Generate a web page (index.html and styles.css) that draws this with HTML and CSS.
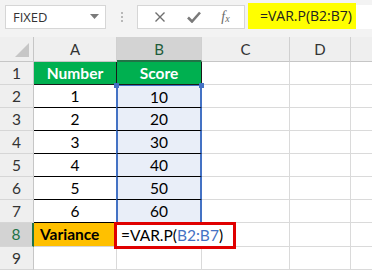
FILE: index.html
```html
<!DOCTYPE html>
<html lang="en">
<head>
    <meta charset="UTF-8">
    <title>VAR.P example</title>
    <link rel="stylesheet" href="styles.css">
</head>
<body>

    <!-- Formula bar -->
    <div class="toolbar">
        <div class="namebox">
            <span>FIXED</span>
            <svg class="caret" width="9" height="5" viewBox="0 0 9 5"><polygon points="0,0 9,0 4.5,5" fill="#7a7a7a"/></svg>
        </div>
        <div class="grip"><i></i><i></i><i></i></div>
        <div class="fxbox">
            <svg width="12" height="12" viewBox="0 0 12 12"><path d="M1.5 1.5 L10.5 10.5 M10.5 1.5 L1.5 10.5" stroke="#6f6f6f" stroke-width="1.4" fill="none"/></svg>
            <svg width="14" height="12" viewBox="0 0 14 12"><path d="M1 6.5 L5 10.5 L13 1.5" stroke="#7a7a7a" stroke-width="2.6" fill="none"/></svg>
            <span class="fx">f<sub>x</sub></span>
        </div>
        <div class="formula"><span class="hl">=VAR.P(B2:B7)</span></div>
    </div>

    <!-- Sheet -->
    <div class="sheet">
        <div class="corner"><svg width="15" height="14" viewBox="0 0 15 14"><polygon points="15,0 15,14 1,14" fill="#c6c6c6"/></svg></div>
        <div class="hd">A</div>
        <div class="hd on">B</div>
        <div class="hd">C</div>
        <div class="hd">D</div>
        <div class="hd last"></div>

        <div class="rh">1</div>
        <div class="c green">Number</div>
        <div class="c green">Score</div>
        <div class="c"></div><div class="c"></div><div class="c last"></div>

        <div class="rh">2</div>
        <div class="c tb">1</div>
        <div class="c tb sel top"><span class="hdl tl"></span><span class="hdl tr"></span>10</div>
        <div class="c"></div><div class="c"></div><div class="c last"></div>

        <div class="rh">3</div>
        <div class="c tb">2</div>
        <div class="c tb sel">20</div>
        <div class="c"></div><div class="c"></div><div class="c last"></div>

        <div class="rh">4</div>
        <div class="c tb">3</div>
        <div class="c tb sel">30</div>
        <div class="c"></div><div class="c"></div><div class="c last"></div>

        <div class="rh">5</div>
        <div class="c tb">4</div>
        <div class="c tb sel">40</div>
        <div class="c"></div><div class="c"></div><div class="c last"></div>

        <div class="rh">6</div>
        <div class="c tb">5</div>
        <div class="c tb sel">50</div>
        <div class="c"></div><div class="c"></div><div class="c last"></div>

        <div class="rh">7</div>
        <div class="c tb">6</div>
        <div class="c tb sel bottom"><span class="hdl bl"></span><span class="hdl br"></span>60</div>
        <div class="c"></div><div class="c"></div><div class="c last"></div>

        <div class="rh on tall">8</div>
        <div class="c orange tall">Variance</div>
        <div class="c tall active">
            <div class="edit">=VAR.P(<span class="ref">B2:B7</span>)</div>
        </div>
        <div class="c tall"></div><div class="c tall"></div><div class="c tall last"></div>

        <div class="rh">9</div>
        <div class="c"></div><div class="c"></div><div class="c"></div><div class="c"></div><div class="c last"></div>
    </div>

</body>
</html>
```

FILE: styles.css
```css
/* Reset */
* {
    box-sizing: border-box;
}

body, html {
    margin: 0;
    padding: 0;
    width: 372px;
    height: 270px;
    overflow: hidden;
    background-color: #fff;
    font-family: Lato, "Liberation Sans", sans-serif;
    color: #000;
}

/* --- Formula bar --- */
.toolbar {
    height: 37px;
    background-color: #f3f3f3;
    display: flex;
    align-items: flex-start;
    padding-top: 5px;
}

.namebox {
    margin-left: 5px;
    width: 101px;
    height: 24px;
    background-color: #fff;
    border: 1px solid #d6d6d6;
    display: flex;
    align-items: center;
    justify-content: space-between;
    padding: 0 6px 0 7px;
    font-family: "Open Sans", sans-serif;
    font-size: 13px;
    color: #333;
}

.caret {
    margin-bottom: 2px;
}

.grip {
    width: 31px;
    height: 24px;
    display: flex;
    flex-direction: column;
    align-items: center;
    justify-content: center;
    gap: 2px;
}

.grip i {
    width: 2px;
    height: 2px;
    background-color: #b8b8b8;
}

.fxbox {
    width: 108px;
    height: 24px;
    background-color: #fff;
    border: 1px solid #d6d6d6;
    display: flex;
    align-items: center;
    justify-content: space-around;
    padding: 0 4px 0 6px;
}

.fx {
    font-family: "Liberation Serif", serif;
    font-style: italic;
    font-size: 14px;
    color: #6a6a6a;
    line-height: 1;
}

.fx sub {
    font-size: 10px;
    vertical-align: -1px;
}

.formula {
    flex: 1;
    height: 24px;
    margin-left: 3px;
    background-color: #fff;
    position: relative;
}

.formula .hl {
    position: absolute;
    left: 0;
    top: -2px;
    width: 108px;
    height: 26px;
    background-color: #ffff00;
    font-family: "Open Sans", sans-serif;
    font-size: 14px;
    line-height: 26px;
    padding-left: 12px;
    color: #222;
}

/* --- Sheet grid --- */
.sheet {
    display: grid;
    grid-template-columns: 34px 83px 85px 88px 61px 1fr;
    grid-template-rows: 25px repeat(7, 23px) 24px 23px;
    font-size: 15.5px;
}

.corner {
    background-color: #efefef;
    border-right: 1px solid #c6c6c6;
    border-bottom: 1px solid #c6c6c6;
    display: flex;
    align-items: flex-end;
    justify-content: flex-end;
    padding: 0 4px 4px 0;
}

.hd {
    background-color: #efefef;
    border-right: 1px solid #d0d0d0;
    border-bottom: 1px solid #c6c6c6;
    text-align: center;
    line-height: 24px;
    color: #333;
    font-size: 15px;
}

.hd.on {
    background-color: #d3d3d3;
    border-bottom: 2px solid #217346;
    color: #1e5c3a;
}

.rh {
    background-color: #efefef;
    border-right: 1px solid #c6c6c6;
    border-bottom: 1px solid #d6d6d6;
    text-align: center;
    line-height: 22px;
    color: #333;
}

.rh.on {
    background-color: #d3d3d3;
    border-right: 2px solid #217346;
    color: #217346;
}

.c {
    position: relative;
    border-right: 1px solid #dadada;
    border-bottom: 1px solid #dadada;
    text-align: center;
    line-height: 22px;
}

.last {
    border-right: none;
}

.green {
    background-color: #00b050;
    color: #fff;
    font-weight: bold;
    border-right: 1px solid #1a1a1a;
    border-bottom: 1px solid #1a1a1a;
}

.tb {
    border-right: 1px solid #000;
    border-bottom: 1px solid #000;
}

/* Referenced range B2:B7 */
.sel {
    background-color: #e9eef8;
    border-left: 2px solid #4472c4;
    border-right: 2px solid #4472c4;
    margin-left: -1px;
}

.sel.top {
    border-top: 1px solid #4472c4;
}

.sel.bottom {
    border-bottom: 1px solid #4472c4;
}

.hdl {
    position: absolute;
    width: 5px;
    height: 5px;
    background-color: #4472c4;
}

.hdl.tl { left: -4px; top: -3px; }
.hdl.tr { right: -4px; top: -3px; }
.hdl.bl { left: -4px; bottom: -3px; height: 3px; }
.hdl.br { right: -4px; bottom: -3px; height: 3px; }

.orange {
    background-color: #ffc000;
    font-weight: bold;
    text-align: left;
    padding-left: 6px;
    border-bottom: 1px solid #d6d6d6;
}

.tall {
    line-height: 23px;
}

/* Cell in edit mode */
.edit {
    position: absolute;
    left: -3px;
    top: -1px;
    width: 122px;
    height: 27px;
    border: 3px solid #e00000;
    background-color: #fff;
    z-index: 2;
    text-align: left;
    padding-left: 4px;
    line-height: 20px;
    font-size: 15.5px;
}

.ref {
    color: #4472c4;
}
```
